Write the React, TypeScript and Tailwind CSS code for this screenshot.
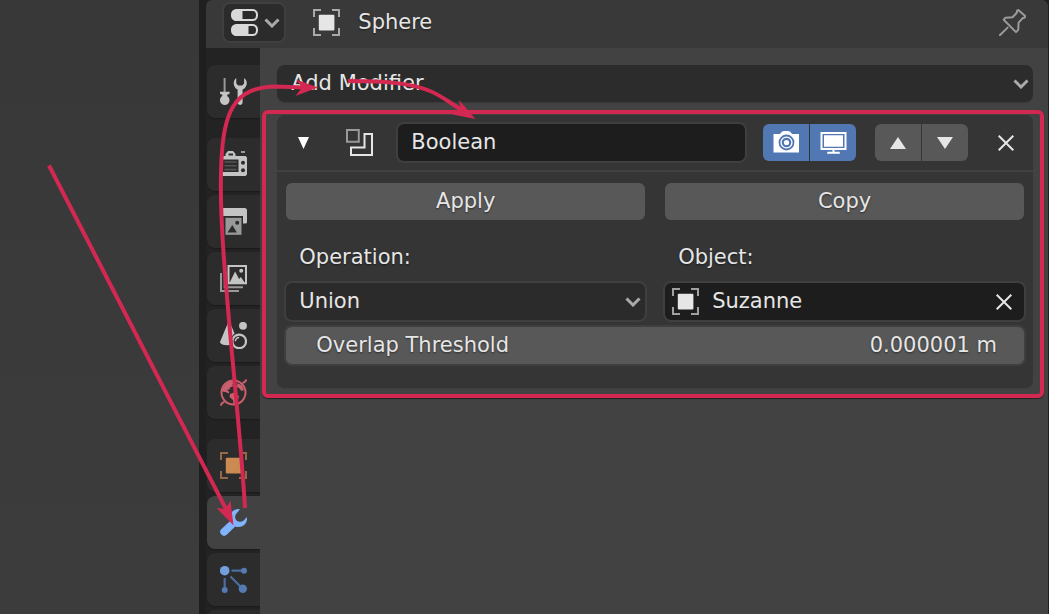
import React from 'react';
import clsx from 'clsx';

type IconProps = { className?: string };

const Svg = ({ className, children }: { className?: string; children: React.ReactNode }) => (
  <svg viewBox="0 0 27 27" fill="none" aria-hidden="true" className={clsx('size-[27px] shrink-0', className)}>
    {children}
  </svg>
);

const EditorTypeIcon = () => (
  <Svg>
    <rect x="1" y="1" width="25" height="10" rx="4.5" stroke="#d9d9d9" strokeWidth="2" />
    <path d="M5 0.5h6.5v11H5a4.5 5.5 0 0 1 0-11z" fill="#d9d9d9" />
    <rect x="1" y="16" width="25" height="10" rx="4.5" stroke="#d9d9d9" strokeWidth="2" />
    <path d="M5 15.5h12.5v11H5a4.5 5.5 0 0 1 0-11z" fill="#d9d9d9" />
  </Svg>
);

const ObjectIcon = ({ className }: IconProps) => (
  <Svg className={className}>
    <path
      d="M1 8V1h7M19 1h7v7M26 19v7h-7M8 26H1v-7"
      stroke="currentColor"
      strokeWidth="2"
      opacity="0.65"
    />
    <rect x="5.8" y="5.8" width="15.6" height="15.6" rx="1" fill="currentColor" />
  </Svg>
);

const PinIcon = () => (
  <Svg className="text-[#9b9b9b]">
    <path
      d="M0.8 26.2l7.8-7.6M19.3 1l6.8 6-.3 1.5-2.3.8-3.9 4.4-.4 7.2-2.2 2.2L4.7 10.7l1.8-2 7-.4 4.3-4.6.3-2z"
      stroke="currentColor"
      strokeWidth="2"
      strokeLinejoin="round"
      strokeLinecap="round"
    />
  </Svg>
);

const ToolIcon = () => (
  <Svg>
    <path d="M4.6 0v14" stroke="#999" strokeWidth="2" />
    <path
      d="M0 13.8h9.6v2l-2.4 1v1.2c2.2 1.6 2.6 3.8 2.2 5.3-.6 2.4-2.2 3.7-4.6 3.7s-4.1-1.3-4.7-3.7c-.4-1.5 0-3.7 2.2-5.300v-1.200l-2.300-1z"
      fill="#c4c4c4"
    />
    <path
      d="M16.3 0.3C12.7 2.2 12.6 9 17.6 11.600V24.400a2.500 2.500 0 0 0 5 0V11.600C27.900 9 27.800 2.200 24.100 .3V5.400l-1.900 2h-4l-1.900-2z"
      fill="#c4c4c4"
    />
  </Svg>
);

const RenderIcon = () => (
  <Svg>
    <path d="M5.500 5V3l2.500-3h5L15.500 3v2H25.500L27 6.500V23.500L25.500 25H2L.5 23.500V5z" fill="#c4c4c4" />
    <path d="M8.500 2.400h4.500v2h-4.500zM3 8.600h15.500v12.400H3z" fill="#2c2c2c" />
    <path d="M4.500 11h12M4.500 14.800h12M4.500 18.600h12" stroke="#555" strokeWidth="1.600" />
    <path d="M21 1h4" stroke="#999" strokeWidth="2" />
    <circle cx="23" cy="11.700" r="2" fill="#2c2c2c" />
    <circle cx="23" cy="19.300" r="2" fill="#2c2c2c" />
  </Svg>
);

const OutputIcon = () => (
  <Svg>
    <path d="M2 0h22.500A2.500 2.500 0 0 1 27 2.500V14a1.500 1.500 0 0 1-1.500 1.500H23V8H1.500A1.500 1.500 0 0 1 0 6.500V2a2 2 0 0 1 2-2z" fill="#c4c4c4" />
    <rect x="5.500" y="9.800" width="16" height="17" fill="#999" />
    <path d="M7.500 24.500l4.800-7.500 4.600 7.500zM8 8h15v1.200H8z" fill="#2c2c2c" />
    <circle cx="17.200" cy="14.800" r="2" fill="#2c2c2c" />
  </Svg>
);

const ViewLayerIcon = () => (
  <Svg>
    <path d="M1 8v18H19M4.700 4.500v17.800H23" stroke="#999" strokeWidth="2" />
    <rect x="8.500" y="1" width="17.500" height="17.300" fill="#2c2c2c" stroke="#c4c4c4" strokeWidth="2" />
    <path d="M9.500 18l5.600-11.500 4 7.500 1.800-2 4 6z" fill="#c4c4c4" />
    <circle cx="21.200" cy="5.800" r="2" fill="#c4c4c4" />
  </Svg>
);

const SceneIcon = () => (
  <Svg>
    <path
      d="M8 0.800C8.500 .3 9.700.3 10.200 1.200L14.600 11.600C11.200 14 10 18.500 11.600 22.400 7.500 23.800 2.500 23.300.3 21 0 20.500 0 20 .2 19.400z"
      fill="#c4c4c4"
    />
    <circle cx="19.200" cy="19.400" r="6.800" stroke="#c4c4c4" strokeWidth="2.200" />
    <path d="M15.400 19.300c0-2.200 1.800-3.800 3.800-3.800" stroke="#c4c4c4" strokeWidth="1.500" />
    <circle cx="23" cy="3.800" r="3.900" fill="#c4c4c4" />
  </Svg>
);

const WorldIcon = () => (
  <Svg>
    <circle cx="13.500" cy="13.500" r="12" stroke="#c9606d" strokeWidth="2" />
    <path d="M22.500 4c1.500 0 3-1.500 4-3.500M4.500 23c-1.500 0-3 1.500-4 3.500" stroke="#c9606d" strokeWidth="2" />
    <path
      d="M2 12.500C3.500 6 8 2.500 13 2l1.500 2-2 1.200.5 2-3 1.300-.5 2-2.500.2 2.300 2.300-.5 1.500L5.500 13zM10 15l4-1.500 5 3.500-1 4-3 4.500-1.500-.5-.5-4-3.500-3zM17.500 4l4.500 2.500 2 4.500-2.500 1-2.500-3-2-1z"
      fill="#c9606d"
    />
  </Svg>
);

const WrenchIcon = () => (
  <Svg>
    <path
      d="M19.700 0C12.500-.3 8.500 5 10.700 11.500L1.200 20.300a3.900 3.900 0 0 0 5.500 5.500l8.500-8.300C21.500 19.800 27.700 15.300 27 8.200 25.500 8.500 24.500 12.500 20.500 12.800 16.500 12.800 14.300 9.500 15.400 6.300 16.500 3.500 19 2.500 19.700 0z"
      fill="#80b4ff"
    />
  </Svg>
);

const ParticlesIcon = () => (
  <Svg>
    <path d="M11.500 4.700h11M4.700 12v11M10.500 10.500l11 11" stroke="#4b6c9f" strokeWidth="2.200" />
    <circle cx="4.700" cy="4.700" r="4.800" fill="#739fdf" />
    <circle cx="24" cy="4.700" r="3" fill="#5579b1" />
    <circle cx="4.700" cy="24" r="3" fill="#5579b1" />
    <circle cx="22.800" cy="22.800" r="4.200" fill="#5579b1" />
  </Svg>
);

const BooleanIcon = () => (
  <Svg>
    <path d="M1 1h11.800v11.800H1z" stroke="#999" strokeWidth="2" />
    <path d="M18.500 5h7.500v21H5v-7.500h13.500z" stroke="#e6e6e6" strokeWidth="2" />
  </Svg>
);

const CameraIcon = () => (
  <Svg>
    <path d="M0.500 5H7L8.500 3l2-1h5l2 1L19 5h7v18.500H.5z" fill="#fff" />
    <circle cx="13.500" cy="13.500" r="7" stroke="#5278b4" strokeWidth="1.800" />
    <circle cx="13.500" cy="13.500" r="3.700" stroke="#5278b4" strokeWidth="2.200" />
  </Svg>
);

const MonitorIcon = () => (
  <Svg>
    <path d="M1.500 4h24v16h-24z" stroke="#fff" strokeWidth="2" />
    <path d="M4 6.300h19v11.400H4zM12.500 20.500h2v3h-2zM7.500 22.800h12l.5 2H7z" fill="#fff" />
  </Svg>
);

const Triangle = ({ up, narrow }: { up?: boolean; narrow?: boolean }) => (
  <svg
    viewBox="0 0 16 12"
    preserveAspectRatio="none"
    aria-hidden="true"
    className={clsx('h-3 fill-current', narrow ? 'w-[11px]' : 'w-4', up && 'rotate-180')}
  >
    <path d="M0 0h16L8 12z" />
  </svg>
);

const Chevron = ({ className }: IconProps) => (
  <svg viewBox="0 0 16 10" fill="none" aria-hidden="true" className={clsx('h-2.5 w-4 text-[#aaa]', className)}>
    <path d="M1.500 1.500L8 8l6.500-6.500" stroke="currentColor" strokeWidth="3" />
  </svg>
);

const Cross = () => (
  <svg viewBox="0 0 16 16" fill="none" aria-hidden="true" className="size-4">
    <path d="M0.700 0.700l14.600 14.600M15.300 0.700L0.700 15.300" stroke="currentColor" strokeWidth="2" />
  </svg>
);

const tabGroups = [
  [{ name: 'Tool', icon: <ToolIcon /> }],
  [
    { name: 'Render', icon: <RenderIcon /> },
    { name: 'Output', icon: <OutputIcon /> },
    { name: 'View Layer', icon: <ViewLayerIcon /> },
    { name: 'Scene', icon: <SceneIcon /> },
    { name: 'World', icon: <WorldIcon /> },
  ],
  [
    { name: 'Object', icon: <ObjectIcon className="text-[#cc8a53]" /> },
    { name: 'Modifiers', icon: <WrenchIcon />, active: true },
    { name: 'Particles', icon: <ParticlesIcon /> },
    { name: 'Physics', icon: null },
  ],
];

const field = 'h-[41px] rounded-lg border-2 border-[#3f3f3f]';
const action =
  'h-[41px] rounded-lg border-2 border-transparent bg-[#585858] bg-clip-padding pb-0.5 [text-shadow:0_1px_2px_rgba(0,0,0,0.5)]';

function Tabs() {
  return (
    <nav className="flex w-[54px] shrink-0 flex-col gap-5 bg-[#232323] pt-[17px] pl-px">
      {tabGroups.map((group, i) => (
        <div key={i} className="flex flex-col gap-1">
          {group.map((tab) => (
            <button
              key={tab.name}
              aria-label={tab.name}
              className={clsx(
                'flex h-[53px] shrink-0 items-center justify-center rounded-l-lg shadow-[0_1px_1px_#1b1b1b]',
                tab.active ? 'bg-[#424242]' : 'bg-[#2c2c2c]'
              )}
            >
              {tab.icon}
            </button>
          ))}
        </div>
      ))}
    </nav>
  );
}

function ModifierHeader() {
  return (
    <div className="flex h-[57px] items-center border-b-2 border-[#414141] pr-[9px] pl-[21px]">
      <button aria-label="Collapse" className="text-white">
        <Triangle narrow />
      </button>
      <div className="mr-[23px] ml-[37px]">
        <BooleanIcon />
      </div>
      <input
        aria-label="Modifier name"
        defaultValue="Boolean"
        className={clsx(field, 'mr-4 min-w-0 flex-1 bg-[#1d1d1d] px-[13px] pb-0.5')}
      />
      <div className="flex gap-px overflow-hidden rounded-md text-white">
        <button aria-label="Render" className="flex h-[37px] w-[46px] items-center justify-center bg-[#5278b4]">
          <CameraIcon />
        </button>
        <button aria-label="Realtime" className="flex h-[37px] w-[46px] items-center justify-center bg-[#5278b4]">
          <MonitorIcon />
        </button>
      </div>
      <div className="ml-[19px] flex gap-px overflow-hidden rounded-md">
        <button aria-label="Move up" className="flex h-[37px] w-[46px] items-center justify-center bg-[#585858]">
          <Triangle up />
        </button>
        <button aria-label="Move down" className="flex h-[37px] w-[46px] items-center justify-center bg-[#585858]">
          <Triangle />
        </button>
      </div>
      <button aria-label="Remove modifier" className="ml-[19px] flex h-[37px] w-[37px] items-center justify-center">
        <Cross />
      </button>
    </div>
  );
}

function ModifierPanel() {
  return (
    <section className="relative mt-[13px] rounded-lg border-b border-[#3f3f3f] bg-[#353535] pb-[22px]">
      <ModifierHeader />
      <div className="flex flex-col gap-[3px] px-[7px] pt-[9px]">
        <div className="mb-3 grid grid-cols-2 gap-4">
          <button className={action}>Apply</button>
          <button className={action}>Copy</button>
        </div>
        <div className="grid grid-cols-2 gap-x-4 gap-y-[3px]">
          <label htmlFor="operation" className="flex h-[41px] items-center px-[15px] pb-0.5">
            Operation:
          </label>
          <label htmlFor="object" className="flex h-[41px] items-center px-[15px] pb-0.5">
            Object:
          </label>
          <div className="relative">
            <select id="operation" className={clsx(field, 'w-full appearance-none bg-[#2b2b2b] px-[13px] pb-0.5')}>
              <option>Union</option>
              <option>Difference</option>
              <option>Intersect</option>
            </select>
            <Chevron className="pointer-events-none absolute top-4 right-[6px]" />
          </div>
          <div className={clsx(field, 'flex items-center bg-[#1d1d1d] pr-3 pl-[7px]')}>
            <ObjectIcon />
            <input id="object" defaultValue="Suzanne" className="ml-[13px] min-w-0 flex-1 bg-transparent pb-0.5" />
            <button aria-label="Clear object">
              <Cross />
            </button>
          </div>
        </div>
        <div className={clsx(field, 'flex items-center bg-[#585858] pr-[27px] pb-0.5 pl-[30px]')}>
          <label htmlFor="threshold">Overlap Threshold</label>
          <input
            id="threshold"
            defaultValue="0.000001 m"
            className="min-w-0 flex-1 bg-transparent text-right [text-shadow:inherit]"
          />
        </div>
      </div>
      {/* highlight frame */}
      <div className="pointer-events-none absolute -top-[5px] -right-[11px] -bottom-[10px] -left-[15px] rounded-md border-4 border-[#d22852] shadow-[0_1px_1px_#222]" />
    </section>
  );
}

function Arrows() {
  return (
    <svg className="pointer-events-none absolute inset-0 h-full w-full" aria-hidden="true">
      <g stroke="#d22852" strokeWidth="4" fill="none">
        <path d="M49 165.500L227 511" />
        <path d="M245 508C241 440 231 350 226.500 290C222 240 219 190 222 152C225 105 240 87 275 86.500L305 87.500" />
        <path d="M348 81C390 81 413 84 430 91C442 96 450 103 462 110" />
      </g>
      <g fill="#d22852">
        <path d="M233.500 525.500L216.500 508L225.500 509L230.500 500.500z" />
        <path d="M318 87.500L295.500 96L302 87.500L296 79.500z" />
        <path d="M475.500 119L452.500 114.500L461 109.500L459 100z" />
      </g>
    </svg>
  );
}

export default function App() {
  return (
    <div className="relative flex h-screen overflow-hidden bg-[#1f1f1f] font-['DejaVu_Sans',sans-serif] text-[21px] leading-6 text-[#e6e6e6] [text-shadow:0_1px_2px_rgba(0,0,0,0.5)]">
      <div className="mr-[7px] w-[19%] shrink-0 bg-linear-to-b from-[#383838] to-[#3c3c3c]" />
      <main className="mr-px flex min-w-0 flex-1 flex-col overflow-hidden rounded-t-md">
        <header className="flex h-12 shrink-0 items-center bg-[#393939] pr-[22px] pb-[3px] pl-4">
          <button aria-label="Editor type" className={clsx(field, 'flex w-16 items-center gap-[6px] bg-[#2b2b2b] pl-[7px]')}>
            <EditorTypeIcon />
            <Chevron />
          </button>
          <ObjectIcon className="mr-[18px] ml-[27px]" />
          <h1 className="flex-1 pb-0.5">Sphere</h1>
          <button aria-label="Pin">
            <PinIcon />
          </button>
        </header>
        <div className="flex min-h-0 flex-1">
          <Tabs />
          <div className="min-w-0 flex-1 bg-[#424242] pt-[17px] pr-[15px] pl-[17px]">
            <div className="relative">
              <select
                aria-label="Add Modifier"
                className="h-[37px] w-full appearance-none rounded-lg bg-[#2c2c2c] px-3.5 pb-0.5 shadow-[0_1px_1px_#3a3a3a]"
              >
                <option>Add Modifier</option>
              </select>
              <Chevron className="pointer-events-none absolute top-3.5 right-1" />
            </div>
            <ModifierPanel />
          </div>
        </div>
      </main>
      <Arrows />
    </div>
  );
}
